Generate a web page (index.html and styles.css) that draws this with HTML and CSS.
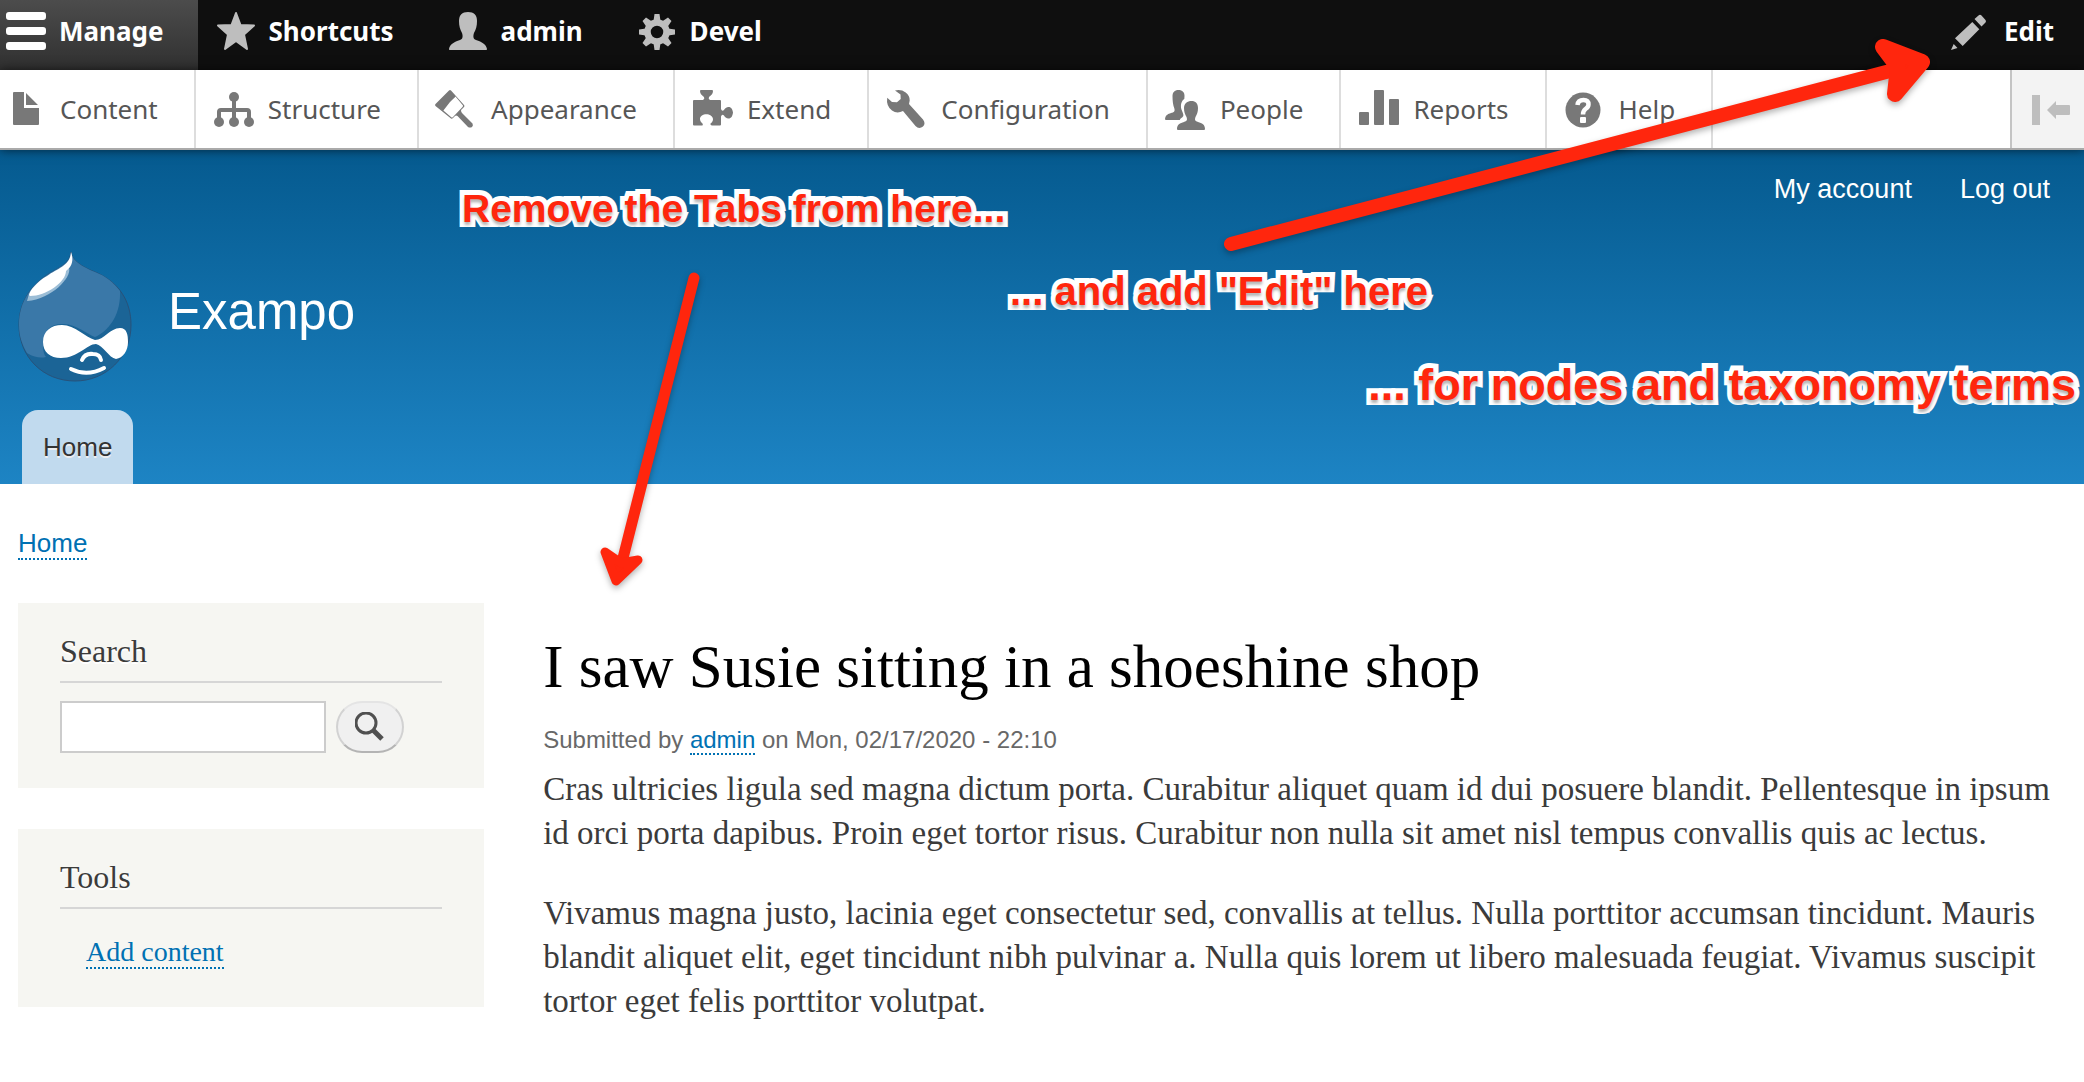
FILE: index.html
```
<!DOCTYPE html>
<html lang="en">

<head>
    <meta charset="UTF-8">
    <meta name="viewport" content="width=device-width, initial-scale=1.0">
    <title>I saw Susie sitting in a shoeshine shop | Exampo</title>
    <link rel="stylesheet" href="styles.css">
</head>

<body>
    <!-- Toolbar -->
    <nav class="toolbar-bar" aria-label="Toolbar">
        <a href="#" class="toolbar-tab is-active">
            <svg class="icon" viewBox="0 0 40 40"><path d="M3 1h34a3 3 0 0 1 3 3v2a3 3 0 0 1-3 3H3a3 3 0 0 1-3-3V4a3 3 0 0 1 3-3zM3 16h34a3 3 0 0 1 3 3v2a3 3 0 0 1-3 3H3a3 3 0 0 1-3-3v-2a3 3 0 0 1 3-3zM3 31h34a3 3 0 0 1 3 3v2a3 3 0 0 1-3 3H3a3 3 0 0 1-3-3v-2a3 3 0 0 1 3-3z"/></svg>
            Manage
        </a>
        <a href="#" class="toolbar-tab">
            <svg class="icon" viewBox="0 0 40 40"><path d="M20 2l4.500 12 13.500.5-10 9L31 38l-11-8-11 8 3-14.500-10-9 13.500-.5z" stroke="currentColor" stroke-width="2" stroke-linejoin="round"/></svg>
            Shortcuts
        </a>
        <a href="#" class="toolbar-tab">
            <svg class="icon" viewBox="0 0 40 40"><path d="M20 1c6 0 9 3 9 9 0 5-1 8-3 12-1 3-1 6 2 7 6 2 10 4 11 9 0 .7-.4 1-1 1H2c-.6 0-1-.3-1-1 1-5 5-7 11-9 3-1 3-4 2-7-2-4-3-7-3-12 0-6 3-9 9-9z"/></svg>
            admin
        </a>
        <a href="#" class="toolbar-tab">
            <svg class="icon" viewBox="0 0 40 40">
                <circle cx="20" cy="21" r="9.5" fill="none" stroke="currentColor" stroke-width="6.5"/>
                <path d="M17.5 3h5l1 7h-7zM17.5 39h5l1-7h-7zM2 18.5v5l7 1v-7zM38 18.5v5l-7 1v-7z"/>
                <path d="M5.5 10L9 6.500l6 4-5.500 5.500zM31 6.500l3.500 3.500-4 6-5.500-5.500zM34.500 32L31 35.500l-6-4 5.500-5.500zM9 35.500L5.500 32l4-6 5.500 5.500z"/>
            </svg>
            Devel
        </a>
        <a href="#" class="toolbar-tab toolbar-edit">
            <svg class="icon" viewBox="0 0 40 40"><path d="M23.500 8l4-3.500q1.500-1.500 3 0l4 4.500q1 1.300 0 2.500l-4 4zM21.300 11l7 7.300L11.700 35 4 27.300zM2.700 33L6.500 37 0 39z"/></svg>
            Edit
        </a>
    </nav>

    <nav class="toolbar-tray" aria-label="Administration menu">
        <a href="#" class="tray-item">
            <svg class="icon" viewBox="0 0 40 40"><path d="M8 3h10v16h15v16a1 1 0 0 1-1 1H8a1 1 0 0 1-1-1V4a1 1 0 0 1 1-1zM20 4l12 12H20z"/></svg>
            Content
        </a>
        <a href="#" class="tray-item">
            <svg class="icon" viewBox="0 0 40 40">
                <path d="M5 33V23q0-2 2-2h26q2 0 2 2v10M20 8v25" fill="none" stroke="currentColor" stroke-width="4"/>
                <circle cx="20" cy="8" r="5"/><circle cx="5" cy="33" r="5"/><circle cx="20" cy="33" r="5"/><circle cx="35" cy="33" r="5"/>
            </svg>
            Structure
        </a>
        <a href="#" class="tray-item">
            <svg class="icon" viewBox="0 0 40 40">
                <path d="M12 1.500q1-1 2 0L27 16q1 1 0 2l-3 3q0 2 1 3l10.500 10.500q1 2-.5 3.500-2 1-4 0L20.500 27q-1.500-1-2.500 0l-2 2q-1 1-2 .5L-1.500 17q-1-1 0-2z"/>
                <path d="M18.500 7.500L26 16.500q0 1-.5 1.500L16 28q-1 1-2 0L4 19.500z" fill="#fff"/>
                <path d="M17 6l1.500 1.500L13 13 6 22l-3-3z"/>
            </svg>
            Appearance
        </a>
        <a href="#" class="tray-item">
            <svg class="icon" viewBox="0 0 40 40"><path d="M0 12q0-1 1-1h9q2-1 1-3C9 6 7 5 7 2q0-1 1-1h11q1 0 1 1c0 3-2 4-4 6q-1 2 1 3h10q1 0 1 1v8q1 3 3 1c1-3 8-6 9 2.500-1 9-8 6-9 3q-2-2-3 1v8q0 1-1 1h-8q-2 0-1.500-2c2-1.500 2.500-3 2.500-4.500-.5-6.500-13-6.500-13 0 0 2 1 3 2.500 4.500q1 2-1 2H1q-1 0-1-1z"/></svg>
            Extend
        </a>
        <a href="#" class="tray-item">
            <svg class="icon" viewBox="0 0 40 40"><path d="M8 1.500Q14 0 18.700 3.500 23 7 22.700 11.500L22 15l14 15.500q3 4 0 7-4 3-7.500-.5L16 22q-6 3-11-.5Q-1 17 .2 8.700L5 13l5 .3 3.700-3.300-.2-4.500z"/></svg>
            Configuration
        </a>
        <a href="#" class="tray-item">
            <svg class="icon" viewBox="0 0 40 40"><path d="M12.500 1c4 0 6 2.500 6 6l-.2 3c-3 2-4 6-3 10 1 3 2.500 5 2 7-1 2-3 2-3.500 4H0q-1 0-1-1c.5-4 3-5 6-6 3-.8 4-1.500 3.500-4C7 16 6.500 12 6.500 7c0-3.500 2-6 6-6zM25.500 12c4 0 6.500 2.500 6.500 7 0 4-1 6-2.500 9-1 3-.5 4 2.500 5 4 1 7 2.500 7 7q0 1-1 1H12q-1 0-1-1c0-4.500 3-6 7-7 3-1 3.500-2 2.500-5-1.500-3-2.500-5-2.500-9 0-4.500 3.500-7 7.500-7z"/></svg>
            People
        </a>
        <a href="#" class="tray-item">
            <svg class="icon" viewBox="0 0 40 40"><rect x="0" y="23" width="10" height="13" rx="1"/><rect x="15" y="1" width="10" height="35" rx="1"/><rect x="30" y="10" width="10" height="26" rx="1"/></svg>
            Reports
        </a>
        <a href="#" class="tray-item">
            <svg class="icon" viewBox="0 0 40 40">
                <circle cx="18" cy="21" r="17.500"/>
                <path d="M12.500 16q.5-5 6-5 5 0 5 4.500 0 2.500-3 4.500-2.500 2-2.500 5.500" fill="none" stroke="#fff" stroke-width="4.500"/>
                <rect x="15" y="28" width="6" height="6" rx="1" fill="#fff"/>
            </svg>
            Help
        </a>
        <button type="button" class="tray-toggle" aria-label="Vertical orientation">
            <svg class="icon" viewBox="0 0 40 40"><path d="M0 6h8v30H0zM15 21l9-9v4h13q1 0 1 1v8q0 1-1 1H24v4z"/></svg>
        </button>
    </nav>

    <!-- Site header -->
    <header class="site-header">
        <nav class="account-menu" aria-label="User account menu">
            <a href="#">My account</a>
            <a href="#">Log out</a>
        </nav>
        <div class="branding">
            <a href="#" aria-label="Home">
                <svg class="logo" viewBox="0 0 114 131">
                    <path d="M53 1c1 8 9 14 24 20 24 10 36 29 36 53 0 32-25 56-56 56C25 130 1 106 1 74c0-24 13-41 31-52C44 15 52 12 53 1z" fill="#1b6496" stroke="#28527a"/>
                    <path d="M53 1c1 8 9 14 24 20 11 4 19 11 25 19 1 25-12 40-25 46-8-3-20-14-33-13-13 0-19 8-19 21 0 6 1 10 3 12-5 1-11 1-19-4C4 93 1 85 1 74c0-24 13-41 31-52C44 15 52 12 53 1z" fill="#3a78a8"/>
                    <path d="M51 17c3 9-17 31-42 33l2-7z" fill="#9bbdd6"/>
                    <path d="M53 1c3 8 1 15-5 19 0 11-20 25-36 25-4-1 6-14 17-20C40 17 52 15 53 1z" fill="#fff"/>
                    <path d="M44 74c13 0 23 12 33 15 9 0 15-12 25-12 7 0 8 7 8 14 0 9-5 16-12 17-7-1-13-14-20-15-9 0-18 14-35 14-11 0-18-6-18-16 0-11 8-17 19-17z" fill="#fff"/>
                    <path d="M64 109q3-7 11-6 7 0 8 6M53 118q16 8 33-1" fill="none" stroke="#fff" stroke-width="4" stroke-linecap="round"/>
                </svg>
            </a>
            <a href="#" class="site-name">Exampo</a>
        </div>
        <nav class="main-menu" aria-label="Main navigation">
            <a href="#" class="menu-tab">Home</a>
        </nav>
    </header>

    <!-- Page content -->
    <div class="page">
        <nav class="breadcrumb" aria-label="Breadcrumb">
            <a href="#" class="link">Home</a>
        </nav>
        <div class="columns">
            <aside class="sidebar">
                <section class="block">
                    <h2>Search</h2>
                    <form class="search-form">
                        <input type="search" class="search-input" aria-label="Search">
                        <button type="submit" class="search-btn" aria-label="Search">
                            <svg viewBox="0 0 30 30" width="30" height="30"><circle cx="11" cy="11" r="10" fill="none" stroke="#505050" stroke-width="3"/><path d="M18 18l9 9" stroke="#505050" stroke-width="5"/></svg>
                        </button>
                    </form>
                </section>
                <section class="block">
                    <h2>Tools</h2>
                    <ul class="tools-menu">
                        <li><a href="#" class="link">Add content</a></li>
                    </ul>
                </section>
            </aside>
            <main class="content">
                <h1>I saw Susie sitting in a shoeshine shop</h1>
                <article>
                    <footer class="submitted">Submitted by <a href="#" class="link">admin</a> on Mon, 02/17/2020 - 22:10</footer>
                    <p>Cras ultricies ligula sed magna dictum porta. Curabitur aliquet quam id dui posuere blandit. Pellentesque in ipsum id orci porta dapibus. Proin eget tortor risus. Curabitur non nulla sit amet nisl tempus convallis quis ac lectus.</p>
                    <p>Vivamus magna justo, lacinia eget consectetur sed, convallis at tellus. Nulla porttitor accumsan tincidunt. Mauris blandit aliquet elit, eget tincidunt nibh pulvinar a. Nulla quis lorem ut libero malesuada feugiat. Vivamus suscipit tortor eget felis porttitor volutpat.</p>
                </article>
            </main>
        </div>
    </div>

    <!-- Notes and arrows drawn over the page -->
    <div class="note note-remove">Remove the Tabs from here...</div>
    <div class="note note-add">... and add "Edit" here</div>
    <div class="note note-large">... for nodes and taxonomy terms</div>
    <svg class="arrow arrow-down" viewBox="0 0 100 320" width="100" height="320">
        <path d="M94 8L22 292" stroke-width="11"/>
        <path d="M5 282L21 293 38 290 16 311z" stroke-width="9"/>
    </svg>
    <svg class="arrow arrow-edit" viewBox="0 0 720 220" width="720" height="220">
        <path d="M11 204L670 31" stroke-width="14"/>
        <path d="M663 7L702 22 675 54 678 27z" stroke-width="16"/>
    </svg>
</body>

</html>
```
FILE: styles.css
```
:root {
    --ui-font: "Lucida Grande", "Noto Sans", sans-serif;
    --sans: "Helvetica Neue", "Liberation Sans", Arial, sans-serif;
    --serif: Georgia, "Liberation Serif", serif;
    --link: #0071b3;
    --note-red: #ff260d;
}

* {
    box-sizing: border-box;
}

body {
    margin: 0;
    position: relative;
    background: #fff;
    color: #3b3b3b;
    font-family: var(--serif);
    font-size: 33px;
    line-height: 44px;
    overflow-x: hidden;
}

a {
    color: inherit;
    text-decoration: none;
}

.icon {
    width: 40px;
    height: 40px;
    flex: none;
    fill: currentColor;
    overflow: visible;
}

/* Toolbar */
.toolbar-bar {
    display: flex;
    height: 70px;
    background: #0f0f0f;
    font: bold 26px/36px var(--ui-font);
    color: #fff;
}

.toolbar-tab {
    display: flex;
    align-items: center;
    gap: 13px;
    padding: 0 36px 8px 18px;
}

.toolbar-tab .icon {
    color: #bebebe;
}

.toolbar-tab.is-active {
    padding-left: 6px;
    padding-right: 34px;
    background: linear-gradient(#4c4c4c, #303030);
}

.toolbar-tab.is-active .icon {
    color: #fff;
}

.toolbar-edit {
    margin-left: auto;
    padding-right: 30px;
}

.toolbar-tray {
    display: flex;
    position: relative;
    height: 80px;
    border-bottom: 2px solid #aaa;
    background: #fff;
    box-shadow: 0 0 10px rgba(0, 0, 0, 0.6);
    font: 26px/36px var(--ui-font);
    color: #565656;
}

.tray-item {
    display: flex;
    align-items: center;
    gap: 14px;
    padding: 0 36px 0 18px;
    border-right: 2px solid #ddd;
}

.tray-item:first-child {
    padding-left: 6px;
}

.tray-item .icon {
    color: #787878;
}

.tray-toggle {
    display: flex;
    align-items: center;
    width: 74px;
    margin-left: auto;
    padding: 0 0 0 20px;
    border: 0;
    border-left: 2px solid #c4c4c4;
    background: #f3f3f3;
    color: #bebebe;
}

/* Site header */
.site-header {
    padding: 20px 18px 0;
    background: linear-gradient(#055a8f, #1d84c4);
    font-family: var(--sans);
    color: #fff;
}

.account-menu {
    display: flex;
    justify-content: flex-end;
    gap: 48px;
    padding-right: 16px;
    font-size: 27px;
    line-height: 38px;
}

.branding {
    display: flex;
    align-items: center;
    gap: 36px;
    margin-top: 43px;
}

.logo {
    display: block;
    width: 114px;
    height: 131px;
}

.site-name {
    font-size: 51px;
    line-height: 60px;
    padding-bottom: 10px;
}

.main-menu {
    display: flex;
    margin: 28px 4px 0;
}

.menu-tab {
    padding: 17px 21px;
    border-radius: 16px 16px 0 0;
    background: #c1daee;
    color: #333;
    font-size: 26px;
    line-height: 40px;
    text-shadow: 0 2px 0 #eee;
}

/* Page */
.page {
    padding: 38px 18px;
}

.link {
    color: var(--link);
    border-bottom: 2px dotted var(--link);
}

.breadcrumb {
    font-family: var(--sans);
    font-size: 26px;
    line-height: 42px;
}

.columns {
    display: grid;
    grid-template-columns: 15fr 49fr;
    column-gap: 59px;
    margin-top: 39px;
}

.block {
    margin-bottom: 41px;
    padding: 26px 42px 35px;
    background: #f6f6f2;
}

.block h2 {
    margin: 0 0 18px;
    padding-bottom: 8px;
    border-bottom: 2px solid #d6d6d6;
    font-size: 32px;
    font-weight: normal;
    line-height: 44px;
    text-shadow: 0 2px 0 #fff;
}

.search-form {
    display: flex;
    gap: 10px;
}

.search-input {
    flex: 0 1 266px;
    min-width: 0;
    height: 52px;
    padding: 4px 8px;
    border: 2px solid #ccc;
    border-radius: 0;
    background: #fff;
    font-size: 28px;
}

.search-btn {
    width: 68px;
    height: 52px;
    padding: 6px 16px;
    border: 2px solid #d2d2d2;
    border-top-color: #e4e4e4;
    border-bottom-color: #b4b4b4;
    border-radius: 26px;
    background: #f0f0f0;
    line-height: 0;
}

.tools-menu {
    margin: 0;
    padding: 5px 0 0 26px;
    list-style: none;
    font-size: 28px;
    line-height: 40px;
}

.content {
    padding-top: 30px;
}

.content h1 {
    margin: 0 0 23px;
    color: #000;
    font-size: 61px;
    font-weight: normal;
    line-height: 68px;
}

.submitted {
    color: #686868;
    font-family: var(--sans);
    font-size: 24px;
    line-height: 32px;
    margin-bottom: 11px;
}

.content p {
    margin: 0 0 36px;
}

/* Notes */
.note {
    position: absolute;
    color: var(--note-red);
    font: bold 39px/46px var(--sans);
    white-space: nowrap;
    -webkit-text-stroke: 10px #fff;
    stroke-linejoin: round;
    paint-order: stroke fill;
    text-shadow: 0 3px 3px rgba(0, 0, 0, 0.3);
}

.note-remove {
    top: 186px;
    left: 462px;
}

.note-add {
    top: 268px;
    left: 1010px;
    font-size: 40px;
}

.note-large {
    top: 360px;
    right: 8px;
    font-size: 45px;
    line-height: 50px;
}

.arrow {
    position: absolute;
    overflow: visible;
    fill: var(--note-red);
    stroke: var(--note-red);
    stroke-linecap: round;
    stroke-linejoin: round;
    filter: drop-shadow(0 3px 3px rgba(0, 0, 0, 0.3));
    pointer-events: none;
}

.arrow-down {
    top: 270px;
    left: 600px;
}

.arrow-edit {
    top: 40px;
    left: 1220px;
}
```
